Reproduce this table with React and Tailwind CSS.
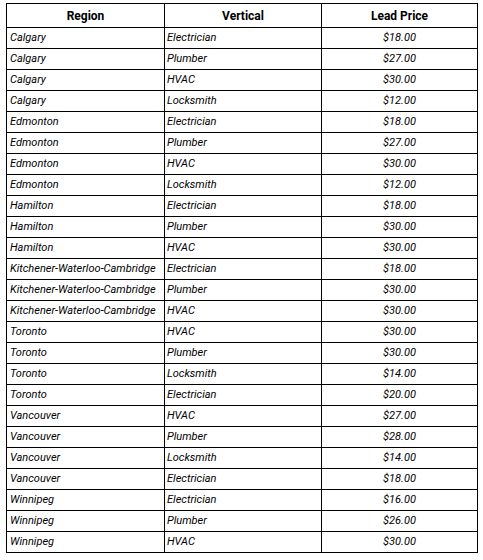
import React from "react";

const rows = [
  ["Calgary", "Electrician", "$18.00"],
  ["Calgary", "Plumber", "$27.00"],
  ["Calgary", "HVAC", "$30.00"],
  ["Calgary", "Locksmith", "$12.00"],
  ["Edmonton", "Electrician", "$18.00"],
  ["Edmonton", "Plumber", "$27.00"],
  ["Edmonton", "HVAC", "$30.00"],
  ["Edmonton", "Locksmith", "$12.00"],
  ["Hamilton", "Electrician", "$18.00"],
  ["Hamilton", "Plumber", "$30.00"],
  ["Hamilton", "HVAC", "$30.00"],
  ["Kitchener-Waterloo-Cambridge", "Electrician", "$18.00"],
  ["Kitchener-Waterloo-Cambridge", "Plumber", "$30.00"],
  ["Kitchener-Waterloo-Cambridge", "HVAC", "$30.00"],
  ["Toronto", "HVAC", "$30.00"],
  ["Toronto", "Plumber", "$30.00"],
  ["Toronto", "Locksmith", "$14.00"],
  ["Toronto", "Electrician", "$20.00"],
  ["Vancouver", "HVAC", "$27.00"],
  ["Vancouver", "Plumber", "$28.00"],
  ["Vancouver", "Locksmith", "$14.00"],
  ["Vancouver", "Electrician", "$18.00"],
  ["Winnipeg", "Electrician", "$16.00"],
  ["Winnipeg", "Plumber", "$26.00"],
  ["Winnipeg", "HVAC", "$30.00"],
];

export default function App() {
  return (
    <div className="w-[483px] h-[560px] bg-white pl-[6px] pt-[3px] font-['Roboto',sans-serif] text-black">
      <table className="border-collapse table-fixed w-[471px]">
        <colgroup>
          <col className="w-[158px]" />
          <col className="w-[157px]" />
          <col className="w-[156px]" />
        </colgroup>
        <thead>
          <tr className="h-[24px]">
            <th className="border border-black p-0 text-center align-middle text-[12px] leading-none font-bold">Region</th>
            <th className="border border-black p-0 text-center align-middle text-[12px] leading-none font-bold">Vertical</th>
            <th className="border border-black p-0 text-center align-middle text-[12px] leading-none font-bold">Lead Price</th>
          </tr>
        </thead>
        <tbody>
          {rows.map((r, i) => (
            <tr key={i} className="h-[21px]">
              <td className="border border-black pt-0 pb-[2px] pl-[3px] pr-0 text-left align-middle text-[11px] italic leading-none whitespace-nowrap">{r[0]}</td>
              <td className="border border-black pt-0 pb-[2px] pl-[2px] pr-0 text-left align-middle text-[11px] italic leading-none">{r[1]}</td>
              <td className="border border-black pt-0 pb-[2px] px-0 text-center align-middle text-[11px] italic leading-none">{r[2]}</td>
            </tr>
          ))}
        </tbody>
      </table>
    </div>
  );
}
